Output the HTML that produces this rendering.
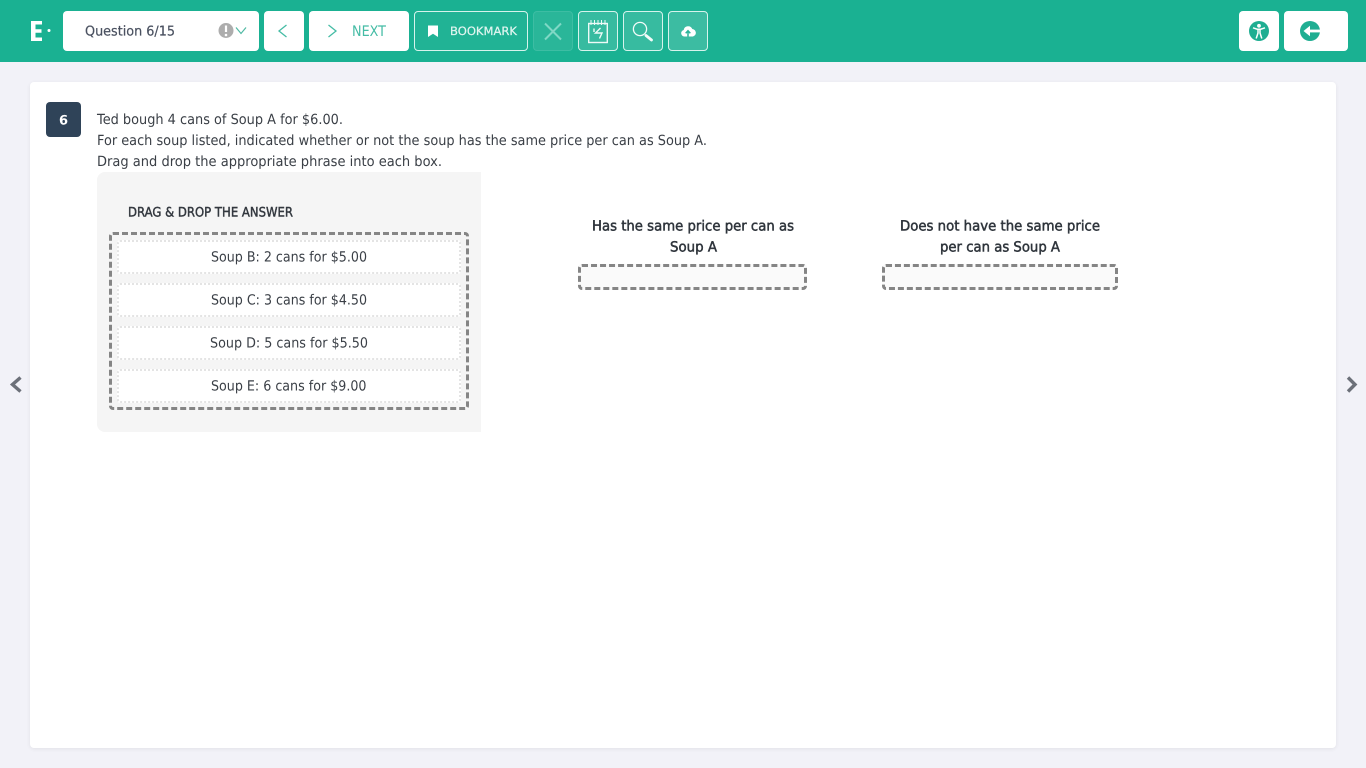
<!DOCTYPE html>
<html lang="en">
<head>
<meta charset="utf-8">
<title>Question 6/15</title>
<style>
html,body{margin:0;padding:0;width:1366px;height:768px;overflow:hidden;background:#f2f2f8;font-family:"DejaVu Sans","Liberation Sans",sans-serif}
.a{position:absolute;box-sizing:border-box}
.hdr{left:0;top:0;width:1366px;height:62px;background:#1ab192}
.w{background:#fff;border-radius:4px;top:11px;height:40px}
.o{top:11px;height:40px;border:1px solid #d6f3ec;border-radius:4px;background:rgba(255,255,255,.13)}
.item{left:117px;width:344px;height:34px;background:#fff;border:2px dotted #e4e4e4;border-radius:3px}
.dash{border:3px dashed #858585;border-radius:4px;background:#fafafa}
svg{position:absolute;left:0;top:0}
text{text-rendering:geometricPrecision}
</style>
</head>
<body>
<div class="a hdr"></div>
<div class="a w" style="left:63px;width:196px"></div>
<div class="a w" style="left:264px;width:40px"></div>
<div class="a w" style="left:309px;width:100px"></div>
<div class="a o" style="left:414px;width:114px;background:rgba(255,255,255,.03)"></div>
<div class="a o" style="left:533px;width:40px;border-color:#3dbda3;background:rgba(255,255,255,.07)"></div>
<div class="a o" style="left:578px;width:40px"></div>
<div class="a o" style="left:623px;width:40px"></div>
<div class="a o" style="left:668px;width:40px;background:rgba(255,255,255,.15)"></div>
<div class="a w" style="left:1239px;width:40px"></div>
<div class="a w" style="left:1284px;width:64px"></div>

<div class="a" style="left:30px;top:82px;width:1306px;height:666px;background:#fff;border-radius:4px;box-shadow:0 1px 4px rgba(0,0,0,.07)"></div>
<div class="a" style="left:46px;top:102px;width:35px;height:35px;background:#2f4358;border-radius:4px"></div>
<div class="a" style="left:97px;top:172px;width:384px;height:260px;background:#f5f5f5;border-radius:8px 0 0 8px"></div>
<div class="a dash" style="left:109px;top:232px;width:360px;height:178px;background:#f5f5f5"></div>
<div class="a item" style="top:240px"></div>
<div class="a item" style="top:283px"></div>
<div class="a item" style="top:326px"></div>
<div class="a item" style="top:369px"></div>
<div class="a dash" style="left:578px;top:264px;width:229px;height:26px"></div>
<div class="a dash" style="left:882px;top:264px;width:236px;height:26px"></div>

<svg width="1366" height="768" viewBox="0 0 1366 768" font-family="'DejaVu Sans','Liberation Sans',sans-serif">
  <!-- logo -->
  <path d="M31 21h11v3.500h-6.500v4.800h6v3.500h-6v4.700h6.500v3.500h-11z" fill="#fff"/>
  <circle cx="49" cy="30.500" r="1.500" fill="#fff"/>

  <!-- header text -->
  <text x="85" y="35.500" font-size="13.500" fill="#4a5160" stroke="#4a5160" stroke-width=".2" textLength="90" lengthAdjust="spacingAndGlyphs">Question 6/15</text>
  <circle cx="226" cy="30.500" r="7.500" fill="#adadad"/>
  <path d="M226 25.500v6.500" stroke="#fff" stroke-width="2.200"/><circle cx="226" cy="35" r="1.300" fill="#fff"/>
  <path d="M236 27.500l5 6 5-6" stroke="#4fb9a3" stroke-width="1.200" fill="none"/>
  <path d="M286.500 25l-7.500 6 7.500 6" stroke="#45bca5" stroke-width="1.300" fill="none"/>
  <path d="M328.500 25l7.500 6-7.500 6" stroke="#45bca5" stroke-width="1.300" fill="none"/>
  <text x="352" y="36" font-size="14.500" fill="#45bca5" textLength="34" lengthAdjust="spacingAndGlyphs">NEXT</text>

  <!-- bookmark -->
  <path d="M428 25.500h10v11.500l-5-3.200-5 3.200z" fill="#fff"/>
  <text x="450" y="35" font-size="11.500" fill="#e3f6f1" stroke="#e3f6f1" stroke-width=".2" textLength="67" lengthAdjust="spacingAndGlyphs">BOOKMARK</text>

  <!-- close -->
  <path d="M545 23.500l16 16M561 23.500l-16 16" stroke="#7fd8c5" stroke-width="2" fill="none"/>

  <!-- calendar -->
  <rect x="588.700" y="23.500" width="18.600" height="19" fill="none" stroke="#eefaf7" stroke-width="1.400"/>
  <path d="M591 20v5M594.500 20v5M598 20v5M601.500 20v5M605 20v5" stroke="#eefaf7" stroke-width="1"/>
  <path d="M600.500 28l-5 5h6.500l-2.500 5.500M594 28.500v3.500" stroke="#eefaf7" stroke-width="1.400" fill="none"/>

  <!-- magnifier -->
  <circle cx="640" cy="29" r="6.600" fill="none" stroke="#f2fbf9" stroke-width="1.300"/>
  <path d="M646 35.500l5.500 4.500" stroke="#f2fbf9" stroke-width="2.800" stroke-linecap="round"/>

  <!-- cloud upload -->
  <path d="M684.300 36.500a3.300 3.300 0 0 1-.6-6.500a4.500 4.500 0 0 1 8.600-1a3.800 3.800 0 0 1 .6 7.500z" fill="#fff"/>
  <path d="M688 36.500v-5M685.700 33.200l2.300-2.500 2.300 2.500" stroke="#2bb49a" stroke-width="1.500" fill="none"/>

  <!-- accessibility -->
  <circle cx="1259" cy="31" r="10" fill="#1fae92"/>
  <circle cx="1259" cy="25.800" r="1.900" fill="#fff"/>
  <path d="M1253 27.800l4.300 1.400h3.400l4.300-1.400M1258 29.500v3.500l-1.800 5.500M1260 29.500v3.500l1.800 5.500" stroke="#fff" stroke-width="1.500" fill="none"/>

  <!-- exit -->
  <circle cx="1310" cy="31" r="10" fill="#1fae92"/>
  <path d="M1309 31h12" stroke="#fff" stroke-width="2.800"/>
  <path d="M1303.500 31l6.500-5.300v10.600z" fill="#fff"/>

  <!-- content text -->
  <text x="63.500" y="124.500" font-size="13" font-weight="700" fill="#fff" text-anchor="middle">6</text>
  <g font-size="14" fill="#3a3f46">
    <text x="97" y="124" textLength="246" lengthAdjust="spacingAndGlyphs">Ted bough 4 cans of Soup A for $6.00.</text>
    <text x="97" y="145" textLength="610" lengthAdjust="spacingAndGlyphs">For each soup listed, indicated whether or not the soup has the same price per can as Soup A.</text>
    <text x="97" y="166" textLength="345" lengthAdjust="spacingAndGlyphs">Drag and drop the appropriate phrase into each box.</text>
    <text x="211" y="261.500" textLength="156" lengthAdjust="spacingAndGlyphs">Soup B: 2 cans for $5.00</text>
    <text x="211" y="304.500" textLength="156" lengthAdjust="spacingAndGlyphs">Soup C: 3 cans for $4.50</text>
    <text x="210" y="347.500" textLength="158" lengthAdjust="spacingAndGlyphs">Soup D: 5 cans for $5.50</text>
    <text x="211" y="390.500" textLength="155.500" lengthAdjust="spacingAndGlyphs">Soup E: 6 cans for $9.00</text>
  </g>
  <text x="128" y="216.500" font-size="13" fill="#33383f" stroke="#33383f" stroke-width=".45" textLength="165" lengthAdjust="spacingAndGlyphs">DRAG &amp; DROP THE ANSWER</text>
  <g font-size="14" fill="#2f353c" stroke="#2f353c" stroke-width=".5">
    <text x="592" y="230.500" textLength="202" lengthAdjust="spacingAndGlyphs">Has the same price per can as</text>
    <text x="670" y="251.500" textLength="47" lengthAdjust="spacingAndGlyphs">Soup A</text>
    <text x="900" y="230.500" textLength="200" lengthAdjust="spacingAndGlyphs">Does not have the same price</text>
    <text x="940" y="251.500" textLength="120" lengthAdjust="spacingAndGlyphs">per can as Soup A</text>
  </g>

  <!-- side chevrons -->
  <path d="M20.500 377.500l-8 7 8 7" stroke="#6c7079" stroke-width="3.400" fill="none"/>
  <path d="M1348 377.500l7 7-7 7" stroke="#6c7079" stroke-width="3.400" fill="none"/>
</svg>
</body>
</html>
